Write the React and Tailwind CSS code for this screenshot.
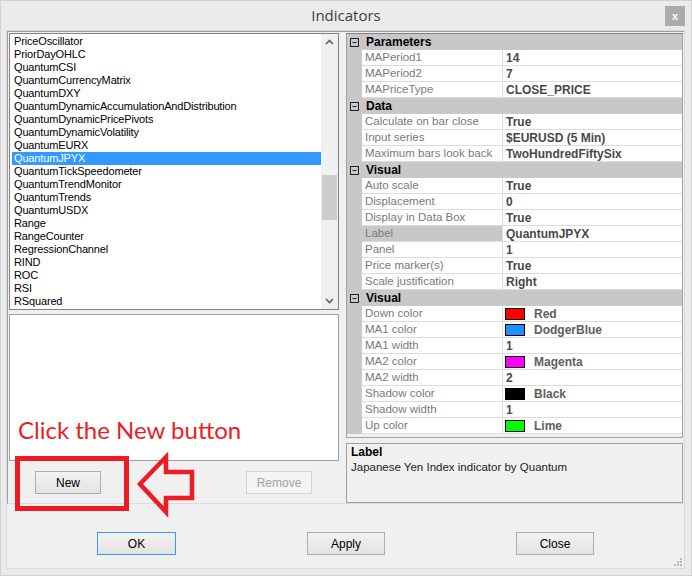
import React from 'react'

const ITEMS = [
  'PriceOscillator', 'PriorDayOHLC', 'QuantumCSI', 'QuantumCurrencyMatrix', 'QuantumDXY',
  'QuantumDynamicAccumulationAndDistribution', 'QuantumDynamicPricePivots', 'QuantumDynamicVolatility',
  'QuantumEURX', 'QuantumJPYX', 'QuantumTickSpeedometer', 'QuantumTrendMonitor', 'QuantumTrends',
  'QuantumUSDX', 'Range', 'RangeCounter', 'RegressionChannel', 'RIND', 'ROC', 'RSI', 'RSquared',
]

const GRID = [
  { cat: 'Parameters' },
  { name: 'MAPeriod1', value: '14' },
  { name: 'MAPeriod2', value: '7' },
  { name: 'MAPriceType', value: 'CLOSE_PRICE' },
  { cat: 'Data' },
  { name: 'Calculate on bar close', value: 'True' },
  { name: 'Input series', value: '$EURUSD  (5 Min)' },
  { name: 'Maximum bars look back', value: 'TwoHundredFiftySix' },
  { cat: 'Visual' },
  { name: 'Auto scale', value: 'True' },
  { name: 'Displacement', value: '0' },
  { name: 'Display in Data Box', value: 'True' },
  { name: 'Label', value: 'QuantumJPYX', selected: true },
  { name: 'Panel', value: '1' },
  { name: 'Price marker(s)', value: 'True' },
  { name: 'Scale justification', value: 'Right' },
  { cat: 'Visual' },
  { name: 'Down color', value: 'Red', color: '#ff0000' },
  { name: 'MA1 color', value: 'DodgerBlue', color: '#1e90ff' },
  { name: 'MA1 width', value: '1' },
  { name: 'MA2 color', value: 'Magenta', color: '#ff00ff' },
  { name: 'MA2 width', value: '2' },
  { name: 'Shadow color', value: 'Black', color: '#000000' },
  { name: 'Shadow width', value: '1' },
  { name: 'Up color', value: 'Lime', color: '#00ff00' },
]

function WinButton({ children, disabled, focused }) {
  return (
    <button
      className={
        'w-full h-[23px] bg-gradient-to-b border text-[12px] ' +
        (disabled
          ? 'border-[#d3d3d3] text-[#a3a3a3] from-[#f4f4f4] to-[#f4f4f4]'
          : focused
            ? 'border-[#3399ff] text-black from-[#f2f2f2] to-[#e3e3e3]'
            : 'border-[#adadad] text-black from-[#f2f2f2] to-[#e3e3e3]')
      }
    >
      {children}
    </button>
  )
}

function MinusBox() {
  return (
    <svg width="11" height="11" viewBox="0 0 11 11" className="shrink-0">
      <rect x="1.5" y="1.5" width="8" height="8" fill="none" stroke="#222" strokeWidth="1" />
      <path d="M3.5 5.5H7.5" stroke="#222" strokeWidth="1" />
    </svg>
  )
}

function GridRow({ row }) {
  if (row.cat) {
    return (
      <div className="h-[16px] bg-[#c8c8c8] flex items-center">
        <div className="w-[15px] flex justify-center"><MinusBox /></div>
        <span className="pl-[4px] text-[12px] font-bold text-black">{row.cat}</span>
      </div>
    )
  }
  return (
    <div className="h-[16px] flex">
      <div className="w-[15px] bg-[#c8c8c8]" />
      <div
        className={
          'w-[141px] pl-[3px] border-b border-r border-[#dcdcdc] text-[11.5px] leading-[15px] text-[#7a7a7a] truncate ' +
          (row.selected ? 'bg-[#c8c8c8]' : 'bg-white')
        }
      >
        {row.name}
      </div>
      <div className="flex-1 bg-white border-b border-[#dcdcdc] flex items-center pl-[2px] text-[12px] font-bold text-[#484848]">
        {row.color ? (
          <>
            <span className="w-[20px] h-[12px] border border-black" style={{ backgroundColor: row.color }} />
            <span className="pl-[9px] text-[#5e5e5e]">{row.value}</span>
          </>
        ) : (
          <span className="pl-[1px]">{row.value}</span>
        )}
      </div>
    </div>
  )
}

export default function App() {
  return (
    <div
      className="relative w-[692px] h-[576px] bg-[#ebebeb] border border-[#d2d2d2] overflow-hidden"
      style={{ fontFamily: "'Liberation Sans', Arial, sans-serif" }}
    >
      {/* title bar */}
      <div className="relative h-[29px] flex items-center justify-center">
        <span className="text-[15px] text-[#3d3d3d]" style={{ fontFamily: "'Open Sans', sans-serif" }}>Indicators</span>
        <div className="absolute right-[6px] top-[5px] w-[20px] h-[20px] bg-[#ababab] flex items-center justify-center text-white text-[11px] font-bold">x</div>
      </div>

      {/* client */}
      <div className="ml-[5px] w-[679px] h-[539px] border border-[#d9d9d9] bg-[#f0f0f0] flex flex-col relative">
        <div className="h-[473px] border-t border-l border-[#a0a0a0] border-b border-b-[#dadada] flex">
          {/* left column */}
          <div className="w-[331px] pl-[1px] pt-[1px] flex flex-col">
            <div className="h-[277px] border border-[#828282] bg-white flex">
              <div className="flex-1 pl-[2px] pt-[1px]">
                {ITEMS.map((it) => (
                  <div
                    key={it}
                    className={
                      'h-[13px] leading-[13px] text-[11px] pl-[2px] tracking-[-0.15px] ' +
                      (it === 'QuantumJPYX' ? 'bg-[#3399ff] text-white' : 'text-black')
                    }
                  >
                    {it}
                  </div>
                ))}
              </div>
              <div className="w-[17px] bg-[#f0f0f0] flex flex-col items-center">
                <svg width="17" height="17" viewBox="0 0 17 17">
                  <path d="M5 10L8.5 6.5L12 10" fill="none" stroke="#606060" strokeWidth="1.6" />
                </svg>
                <div className="h-[124px]" />
                <div className="w-[15px] h-[45px] bg-[#cdcdcd]" />
                <div className="flex-1" />
                <svg width="17" height="17" viewBox="0 0 17 17">
                  <path d="M5 7L8.5 10.5L12 7" fill="none" stroke="#606060" strokeWidth="1.6" />
                </svg>
              </div>
            </div>
            <div className="mt-[4px] h-[147px] border border-[#a0a0a0] bg-white" />
            <div className="mt-[10px] flex">
              <div className="ml-[26px] w-[66px] flex"><WinButton>New</WinButton></div>
              <div className="ml-[145px] w-[66px] flex"><WinButton disabled>Remove</WinButton></div>
            </div>
          </div>

          <div className="w-[6px]" />

          {/* right column */}
          <div className="flex-1 pl-[1px] pr-[1px] pt-[1px] flex flex-col">
            <div className="h-[405px] border border-[#a0a0a0] border-t-[#828282] bg-[#f0f0f0]">
              {GRID.map((r, i) => <GridRow key={i} row={r} />)}
            </div>
            <div className="mt-[5px] flex-1 border border-[#a0a0a0] bg-[#f0f0f0] px-[4px] pt-[1px]">
              <div className="text-[12px] font-bold text-black leading-[15px]">Label</div>
              <div className="text-[11.5px] text-[#222] leading-[15px]">Japanese Yen Index indicator by Quantum</div>
            </div>
          </div>
        </div>

        {/* bottom buttons */}
        <div className="mt-[28px] pl-[90px] flex gap-[131px]">
          <div className="w-[79px] flex"><WinButton focused>OK</WinButton></div>
          <div className="w-[78px] flex"><WinButton>Apply</WinButton></div>
          <div className="w-[78px] flex"><WinButton>Close</WinButton></div>
        </div>

        {/* resize grip */}
        <svg className="absolute right-[1px] bottom-[1px]" width="10" height="10" viewBox="0 0 10 10">
          {[[7, 1], [4, 4], [7, 4], [1, 7], [4, 7], [7, 7]].map(([x, y], i) => (
            <rect key={i} x={x} y={y} width="2" height="2" fill="#b5b5b5" />
          ))}
        </svg>
      </div>

      {/* annotation overlay */}
      <div
        className="absolute left-[17px] top-[414px] text-[24px] leading-[30px] text-[#ec1c24]"
        style={{ fontFamily: "Lato, sans-serif" }}
      >
        Click the New button
      </div>
      <div className="absolute left-[14px] top-[455px] w-[114px] h-[55px] border-[5px] border-[#ec1c24]" />
      <svg className="absolute left-0 top-0 pointer-events-none" width="692" height="576">
        <path
          d="M139 483 L165 456 L165 471 L191 471 L191 497 L165 497 L165 511 Z"
          fill="none"
          stroke="#ec1c24"
          strokeWidth="4.5"
          strokeLinejoin="miter"
        />
      </svg>
    </div>
  )
}
